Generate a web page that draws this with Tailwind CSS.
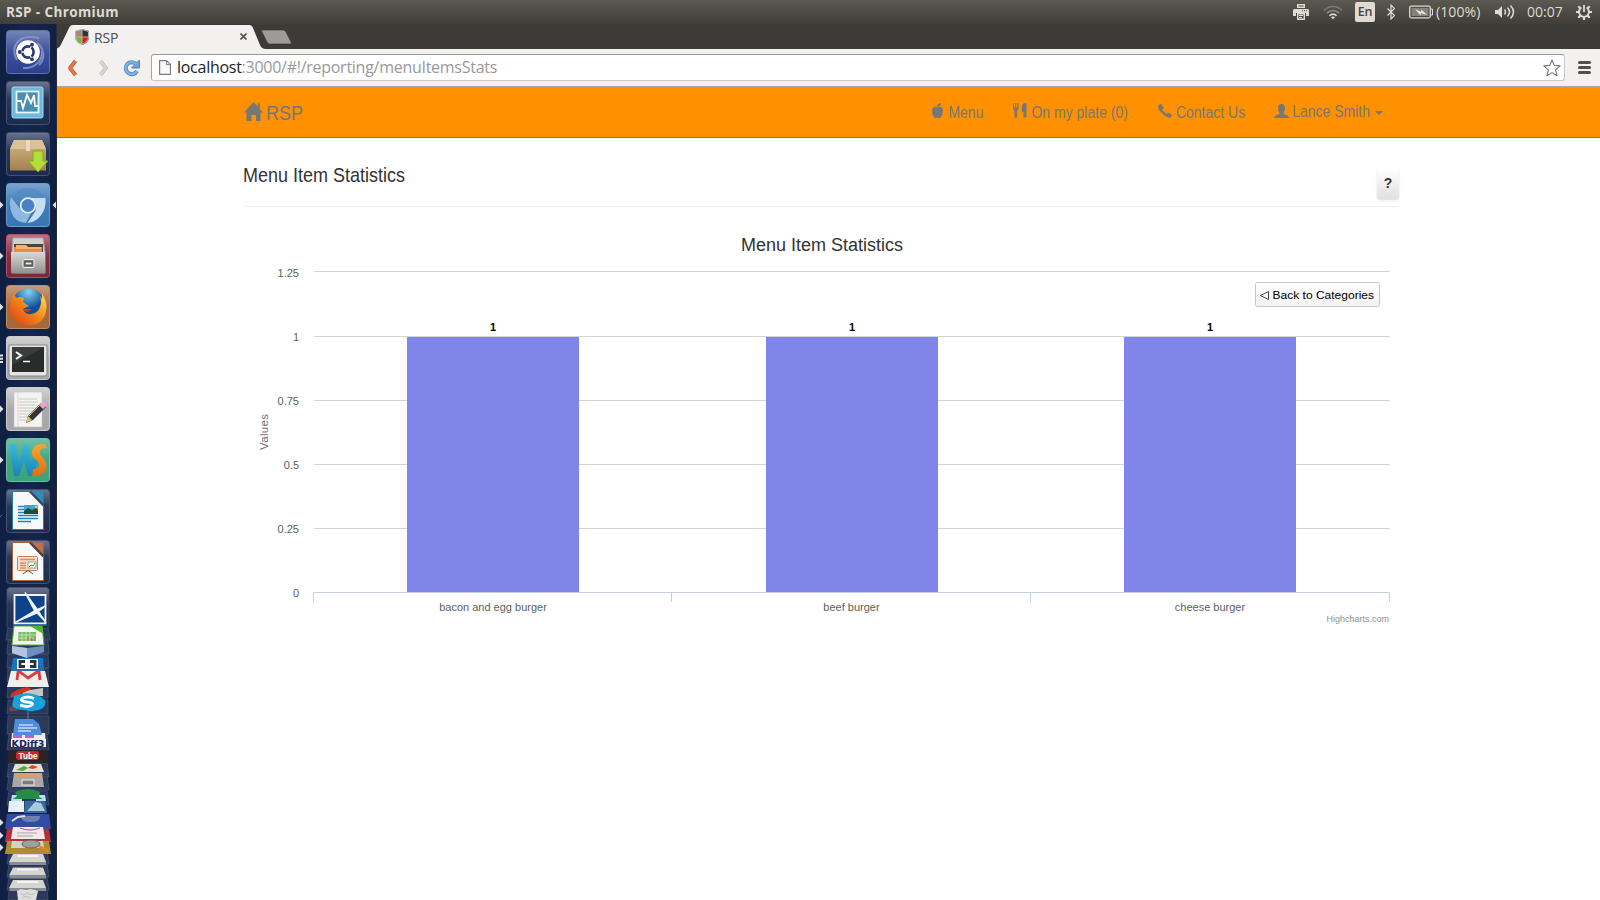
<!DOCTYPE html>
<html lang="en">
<head>
<meta charset="utf-8">
<title>RSP</title>
<script src="https://cdn.jsdelivr.net/npm/@tailwindcss/browser@4"></script>
</head>
<body class="w-[1600px] h-[900px] overflow-hidden bg-white font-['Liberation_Sans',Arial,sans-serif] flex flex-col">

<!-- system panel -->
<header class="h-6 shrink-0 flex items-center bg-gradient-to-b from-[#5b5950] to-[#3f3e39] text-[#dfdbd2] font-['Open_Sans','Noto_Sans',sans-serif]">
  <div class="ml-1.5 w-[200px] text-[13.5px] font-bold leading-6 tracking-[0.38px] whitespace-nowrap">RSP - Chromium</div>
  <div class="ml-auto flex items-center h-6 mr-2">
    <svg class="w-4 h-4" viewBox="0 0 16 16" fill="#dfdbd2"><path d="M4 0h8v4H4zM1 5h14l1 1v6h-3V9H3v3H0V6z"/><path d="M4.7 9.700h6.600v5.500H4.700z" fill="none" stroke="#dfdbd2" stroke-width="1.400"/><path d="M6 11h4v1H6zM6 13h3v1H6z"/><path d="M5.500 1.500h5v1h-5zM9 6.300h1v1H9zM11 6.300h1v1h-1zM13 6.300h1v1h-1z" fill="#4c4a43"/></svg>
    <svg class="ml-3.5 w-5 h-5" viewBox="0 0 20 20" fill="none" stroke-width="1.700"><path d="M.8 8.500C6 3.200 14 3.200 19.200 8.500" stroke="#7d7a72"/><path d="M3.800 11.200c3.800-3.600 8.600-3.600 12.400 0" stroke="#8d8a82"/><path d="M6.500 13.800c2.200-2 4.800-2 7 0" stroke="#dfdbd2"/><path d="M8 15.200q2-1.500 4 0l-2 2z" fill="#dfdbd2"/></svg>
    <div class="ml-3 w-5 h-5 rounded-[2px] bg-[#dfdbd2] text-[#45443f] text-[12.500px] leading-[20px] font-semibold text-center tracking-tight">En</div>
    <svg class="ml-3 w-2 h-4" viewBox="0 0 8 16" fill="none" stroke="#dfdbd2" stroke-width="1.200"><path d="M.5 4.500l7 7L4 15V1l3.500 3.500-7 7"/></svg>
    <svg class="ml-3.5 w-6 h-4" viewBox="0 0 24 16"><rect x=".7" y="2.200" width="20.600" height="11.600" rx="1.500" fill="none" stroke="#dfdbd2" stroke-width="1.300"/><rect x="2.500" y="4" width="17" height="8" fill="#85827a"/><path d="M22 5h1.500v6H22" stroke="#dfdbd2" fill="none"/><path d="M6 5l6 3 .5-2.500L18 11l-6-2-.5 2.500z" fill="#eeeae0"/></svg>
    <span class="ml-[3px] w-[47px] text-[14px] leading-6 tracking-[0.1px] whitespace-nowrap">(100%)</span>
    <svg class="ml-3 w-5 h-4" viewBox="0 0 20 16" fill="none" stroke="#dfdbd2" stroke-width="1.500"><path d="M0 6h3l4-4v12L3 10H0z" fill="#dfdbd2" stroke="none"/><path d="M9.500 5.500q2 2.500 0 5M12.500 3.500q4 4.500 0 9M15.500 1.500q6 6.500 0 13"/></svg>
    <span class="ml-3 w-9 text-[14px] leading-6 tracking-[0px] whitespace-nowrap">00:07</span>
    <svg class="ml-[13px] w-4 h-4" viewBox="0 0 16 16" fill="none" stroke="#dfdbd2"><path d="M10.500 3.500a5 5 0 1 1-5 0" stroke-width="1.900"/><path d="M8 1v7" stroke-width="1.800"/><path d="M2.300 2.300l2 2M13.700 2.300l-2 2M0 8h3M13 8h3M2.300 13.700l2-2M13.700 13.700l-2-2M8 13v3" stroke-width="2.200"/></svg>
  </div>
</header>

<div class="flex flex-1 min-h-0">
  <!-- launcher -->
  <aside class="w-[57px] shrink-0 bg-gradient-to-r from-[#0f1f42] via-[#142650] to-[#10203f] border-r border-[#292b38] flex flex-col">
    <div class="pt-1.5 flex flex-col gap-[7px]">
      <!-- dash -->
      <svg class="w-14 h-11" viewBox="-6 0 56 44"><defs><linearGradient id="dash" x2="0" y2="1"><stop stop-color="#7585b8"/><stop offset=".5" stop-color="#3c529a"/><stop offset="1" stop-color="#2c4090"/></linearGradient><linearGradient id="glass" x2="0" y2="1"><stop stop-color="#6b7590"/><stop offset=".4" stop-color="#2a3759"/><stop offset="1" stop-color="#1d2b50"/></linearGradient></defs>
        <rect x=".5" y=".5" width="43" height="43" rx="3" fill="url(#dash)" stroke="#6172ab"/><path d="M8 20C10 8 20 5 33 8M36 21c1 9-7 18-19 17M11 30C5 20 10 12 17 8M31 13c7 5 9 16 2 22" stroke="#8b9bcc" stroke-width="2" fill="none" opacity=".8"/><circle cx="22" cy="22" r="11.800" fill="#fff"/><circle cx="22" cy="22" r="5.600" fill="none" stroke="#2a3970" stroke-width="2.600"/><path d="M22 22L13 22M22 22l5-8.500M22 22l5 8.500" stroke="#fff" stroke-width="1.300"/><circle cx="22" cy="22" r="4" fill="#fff"/><g fill="#2a3970"><circle cx="13.700" cy="22" r="1.900"/><circle cx="26" cy="14.700" r="1.900"/><circle cx="26" cy="29.300" r="1.900"/></g></svg>
      <!-- system monitor -->
      <svg class="w-14 h-11" viewBox="-6 0 56 44"><rect x=".5" y=".5" width="43" height="43" rx="3" fill="url(#glass)" stroke="#46516e"/><rect x="6" y="6" width="31" height="31" rx="2" fill="#6cb9dd" stroke="#a2dcf0"/><rect x="10.500" y="10.500" width="22" height="21" fill="#468fb2" stroke="#e8f6fb" stroke-width="1.800"/><path d="M11 20h4l2 7 4-13 4 8 3-8 1 11h4" fill="none" stroke="#fff" stroke-width="1.800"/></svg>
      <!-- package installer -->
      <svg class="w-14 h-11" viewBox="-6 0 56 44"><defs><linearGradient id="box" x2="0" y2="1"><stop stop-color="#d5b788"/><stop offset="1" stop-color="#a3804f"/></linearGradient></defs><rect x=".5" y=".5" width="43" height="43" rx="3" fill="url(#glass)" stroke="#46516e"/><path d="M8 8h28l4 9v21.500H4V17z" fill="url(#box)"/><path d="M8 8h28l4 9H4z" fill="#dbc198"/><path d="M20 8h4v11h-4z" fill="#ead9bb"/><path d="M27 19h10v10h5L32 40 22 29h5z" fill="#b6db3c" stroke="#80a81c"/></svg>
      <!-- chromium -->
      <svg class="w-14 h-11" viewBox="-6 0 56 44"><defs><linearGradient id="chr" x2="0" y2="1"><stop stop-color="#7ba5cf"/><stop offset=".5" stop-color="#3f7cba"/><stop offset="1" stop-color="#3876b4"/></linearGradient></defs><path d="M-6 18.500l3.500 3.500-3.500 3.500zM50 18.500L46.500 22l3.500 3.500z" fill="#dfe2e6"/><rect x=".5" y=".5" width="43" height="43" rx="3" fill="url(#chr)" stroke="#6d9ccc"/><path d="M5 14L15 27q4 5 10 3l-5 10Q8 39 5 28q-2-7 0-14z" fill="#8db8e0"/><path d="M24 15h15.500q1 11-5 18-5 6-13 7l8-12q3-8-5.500-13z" fill="#c5def2"/><path d="M6 13Q12 5 22 5q12 0 17 10H23q-6 1-8 9z" fill="#5089c3" opacity=".6"/><circle cx="22" cy="22.500" r="8.300" fill="#e6f0fa"/><circle cx="22" cy="22.500" r="6.500" fill="#4b80c4"/></svg>
      <!-- files -->
      <svg class="w-14 h-11" viewBox="-6 0 56 44"><defs><linearGradient id="cab" x2="0" y2="1"><stop stop-color="#d8d8d6"/><stop offset="1" stop-color="#929290"/></linearGradient><linearGradient id="red" x2="0" y2="1"><stop stop-color="#b77583"/><stop offset=".5" stop-color="#852f43"/><stop offset="1" stop-color="#7b263b"/></linearGradient></defs><path d="M-6 18.500l3.500 3.500-3.500 3.500z" fill="#dfe2e6"/><rect x=".5" y=".5" width="43" height="43" rx="3" fill="url(#red)" stroke="#b05263"/><path d="M7 4h30l2 15v20H6V19z" fill="#d0d0cd" stroke="#aaa"/><path d="M8 10h29v9H8z" fill="#49453f"/><path d="M8 13h28v6H8z" fill="#e58c43"/><path d="M10 11h10l2 2h13v2H10z" fill="#f7b06d"/><path d="M5 18h34v21H5z" fill="url(#cab)"/><rect x="17" y="25.500" width="11" height="8" rx="1" fill="#777" stroke="#eee"/><rect x="19" y="28" width="7" height="3" fill="#eee" stroke="#444"/></svg>
      <!-- firefox -->
      <svg class="w-14 h-11" viewBox="-6 0 56 44"><defs><linearGradient id="ffb" x2="0" y2="1"><stop stop-color="#c99b7b"/><stop offset=".5" stop-color="#a86a40"/><stop offset="1" stop-color="#a5673b"/></linearGradient><radialGradient id="globe" cx=".5" cy=".1"><stop stop-color="#85d4f2"/><stop offset="1" stop-color="#124f98"/></radialGradient><linearGradient id="fox" x1="1" x2="0" y2="1"><stop stop-color="#ffe34d"/><stop offset=".5" stop-color="#f38219"/><stop offset="1" stop-color="#d63d12"/></linearGradient></defs><path d="M-6 18.500l3.500 3.500-3.500 3.500z" fill="#dfe2e6"/><rect x=".5" y=".5" width="43" height="43" rx="3" fill="url(#ffb)" stroke="#c18c66"/><circle cx="22.500" cy="20" r="16.500" fill="url(#globe)"/><path d="M5 14l2-5 4 4q4-2 7 0l-1 4 6 4-6 3q2 6 8 5 7-1 9-7 2-5 0-11l2 3 0-5q5 7 4.500 14Q39 40 22 40.500 4 39 4 23q0-5 1-9z" fill="url(#fox)"/><path d="M17 25q5 4 9-1l-5 0q-3-1-4 1z" fill="#c8431a"/></svg>
      <!-- terminal -->
      <svg class="w-14 h-11" viewBox="-6 0 56 44"><defs><linearGradient id="grey" x2="0" y2="1"><stop stop-color="#d2d2d4"/><stop offset=".5" stop-color="#aaaaae"/><stop offset="1" stop-color="#a7a7ac"/></linearGradient></defs><path d="M-6 18.500h3v2h-3zM-6 21.700h3v2h-3zM-6 25h3v2h-3z" fill="#dfe2e6"/><rect x=".5" y=".5" width="43" height="43" rx="3" fill="url(#grey)" stroke="#ccc"/><path d="M3 9h38v29l-2 2H5l-2-2z" fill="#e4e4e2" stroke="#888"/><path d="M6 11h32v25H6z" fill="#292c2b"/><path d="M6 11h32L6 29z" fill="#3b3e3d"/><path d="M10 16l5 3.500-5 3.500" fill="none" stroke="#fff" stroke-width="2"/><path d="M17 25.500h7" stroke="#fff" stroke-width="1.500"/></svg>
      <!-- text editor -->
      <svg class="w-14 h-11" viewBox="-6 0 56 44"><path d="M-6 18.500l3.500 3.500-3.500 3.500z" fill="#dfe2e6"/><rect x=".5" y=".5" width="43" height="43" rx="3" fill="url(#grey)" stroke="#ccc"/><path d="M8 5h28v35H8z" fill="#f3f3f2" stroke="#c5c5c5" stroke-width=".6"/><path d="M12 5v35" stroke="#e9baba" stroke-width=".6"/><path d="M13 12h18M13 15h19M13 18h16M13 21h18M13 24h15M13 27h10M13 30h12M13 33h7" stroke="#c9c9cb"/><path d="M20 36l2-7 13-13 5 4-13 13z" fill="#343437"/><path d="M20 36l2-7 4 4z" fill="#dac46e"/><path d="M33 18l4-4 4 4-4 4z" fill="#e9a5ce"/><path d="M23 29l12-12" stroke="#c9b451" stroke-width="1"/></svg>
      <!-- webstorm -->
      <svg class="w-14 h-11" viewBox="-6 0 56 44"><defs><linearGradient id="wsb" x2="0" y2="1"><stop stop-color="#75bfa4"/><stop offset=".5" stop-color="#42a681"/><stop offset="1" stop-color="#3ba47d"/></linearGradient><linearGradient id="wsw" x2="0" y2="1"><stop stop-color="#36bbdc"/><stop offset="1" stop-color="#1a83b9"/></linearGradient><linearGradient id="wss" x2="0" y2="1"><stop stop-color="#f8a62d"/><stop offset="1" stop-color="#e16b13"/></linearGradient></defs><path d="M-6 18.500l3.500 3.500-3.500 3.500z" fill="#dfe2e6"/><rect x=".5" y=".5" width="43" height="43" rx="3" fill="url(#wsb)" stroke="#70c0a5"/><path d="M3 6h7l3 19 5-19h4l3 18 3-7 4 7-6 14h-4l-4-16-5 16H8z" fill="url(#wsw)"/><path d="M41 10l-2-4q-11-1-13 7-1 5 4 9 4 3 3 6-1 3-6 3l-1 7q11 1 14-6 2-6-3-12-4-4-3-7 1-3 7-3z" fill="url(#wss)"/></svg>
      <!-- writer -->
      <svg class="w-14 h-11" viewBox="-6 0 56 44"><path d="M-6 28l2-2" stroke="#49688f"/><rect x=".5" y=".5" width="43" height="43" rx="3" fill="url(#glass)" stroke="#46516e"/><path d="M6.500 2.500h18l13 14v24h-31z" fill="#f7f8f8" stroke="#247eab"/><path d="M25 2.500h12.500V15z" fill="#3688b5"/><path d="M24 2.500l13.500 14" stroke="#2d4a66" stroke-width="2.500"/><path d="M12 17.500h6M12 20.500h6M12 23.500h6M12 26.500h20M12 29.500h20M12 32.500h13" stroke="#2482b5" stroke-width="1.300"/><rect x="18" y="16" width="14" height="9" fill="#3fa6d6"/><path d="M18 25v-3l4-3 4 2 4-2 2 2v4z" fill="#274c30"/><circle cx="30" cy="18" r="1.200" fill="#ffdf4b"/></svg>
      <!-- impress -->
      <svg class="w-14 h-11" viewBox="-6 0 56 44"><rect x=".5" y=".5" width="43" height="43" rx="3" fill="url(#glass)" stroke="#46516e"/><path d="M6.500 2.500h18l13 14v24h-31z" fill="#f7f8f8" stroke="#b26136"/><path d="M25 2.500h12.500V15z" fill="#bd704b"/><path d="M24 2.500l13.500 14" stroke="#4c3f45" stroke-width="2.500"/><rect x="11.500" y="16.500" width="20" height="14" rx="1" fill="#f7ded0" stroke="#cf7d52"/><path d="M14 19.500h15M14 23h6M14 25.500h6M14 28h6" stroke="#dc8c68" stroke-width="1.300"/><rect x="22" y="22" width="8" height="6" fill="#fff" stroke="#88ae7e"/><path d="M23 27l2-2 2 1 2-3" stroke="#2e9859" fill="none"/><path d="M17 34l4-3h2l4 3" fill="none" stroke="#555"/></svg>
    </div>
    <!-- collapsed launcher items -->
    <svg class="w-14 h-[316px] shrink-0" viewBox="0 584 56 316">
      <g fill="#2b395b" stroke="#47546f" stroke-width=".7"><path d="M8 626h40l2 14H6zM8 640h40l1 14H7zM8 654h40l1 14H7zM8 668h40l1 14H7zM8 684h40v14H7zM8 700h40v14H7zM8 716h41v18H7zM9 734h38l2 16H7zM9 763h38l2 14H7zM9 774h38l2 16H7zM9 791h38l2 14H7zM9 850h38l2 14H7zM9 864h38l2 13H7zM9 877h38l2 13H7zM9 890h38l1 10H8z"/><path d="M9 587.500h38l2 2v36l-2 3H9l-2-3v-36z" fill="url(#glass)"/></g>
      <!-- spreadsheet -->
      <path d="M14 626h28l2 19H12z" fill="#f2f5ef" stroke="#5cb330"/><path d="M30 626h12l1.500 8z" fill="#54b52c"/><path d="M18.500 632h17.500v9H18z" fill="#74bf65"/><path d="M18 635h18M18 638h18M22 632v9M26 632v9M30 632v9" stroke="#d8efd2" stroke-width=".7"/><path d="M28 641v-4M35 641v-4" stroke="#df7741" stroke-width="1.700"/><path d="M31.500 641v-3" stroke="#3f9ed0" stroke-width="1.700"/>
      <!-- crossed lines window -->
      <path d="M14.500 595h31v28.500h-31z" fill="#0c438b" stroke="#f0f4fa" stroke-width="1.800"/><path d="M13 625h34" stroke="#2d6bb0" stroke-width="1.300"/><path d="M25 592.500l11 15 10 15-12-13zM15 622.500l20-12 11-5-10 8z" fill="#f0f5fb" stroke="#f0f5fb" stroke-width="1.300"/>
      <!-- cube -->
      <path d="M12 646l15 2 17-2v6l-17 6-15-5z" fill="#6e8fc3"/><path d="M12 646l15 2v10l-15-5z" fill="#b4c5e0"/>
      <!-- brackets -->
      <path d="M13 658h30l1 13H11z" fill="#1974c0"/><path d="M17 659h21v10H17z" fill="#fff"/><path d="M25 661.500h-5v5h5M30 661.500h5v5h-5" fill="none" stroke="#27323c" stroke-width="2.800"/>
      <!-- mail -->
      <path d="M11 671h34l4 16H7z" fill="#f0eeeb"/><path d="M17 680l1-8h2l8 6 9-6h2l1 8" fill="none" stroke="#dc3c3d" stroke-width="2.800"/>
      <!-- knife and chat -->
      <path d="M23 691l20-3v8H22z" fill="#c8c5bf"/><path d="M11 694q5-5 16-7l5 2q-10 4-18 8h-4z" fill="#cc3325"/><path d="M14 696q14-6 27 1 8 5 2 11-8 5-19 2-15-1-11-8z" fill="#18a1dc"/><path d="M34 698.500q-7-3-12 0-2 3 5 3.500t5 3q-4 3-12 0" fill="none" stroke="#fff" stroke-width="2.800"/><path d="M10 706l9 5H9z" fill="#704744"/><path d="M28 711v10" stroke="#8d98aa" stroke-width=".7"/>
      <!-- documents and diff -->
      <path d="M12 733h33l1 14H11z" fill="#eee"/><path d="M13 734h9v4h-9zM25 734h9v4h-9z" fill="#c45bcc"/><path d="M15 719h18l6 5 3 11H13z" fill="#4d8de0"/><path d="M19 725h14M18 728h19M18 731h13" stroke="#fff" stroke-width="1"/>
      <path d="M11 739h35v8H11z" fill="#f4f3f8"/><text x="11.500" y="746.800" textLength="33" lengthAdjust="spacingAndGlyphs" font-family="DejaVu Sans" font-size="8.500" font-weight="bold" fill="#202458">KDiff3</text>
      <!-- tube -->
      <path d="M9 750h38l2 13H7z" fill="#292522"/><rect x="16" y="751" width="23" height="9" rx="3" fill="#bd2c2b"/><text x="18.500" y="758.600" textLength="19" lengthAdjust="spacingAndGlyphs" font-family="Liberation Sans" font-size="8.500" font-weight="bold" fill="#fff">Tube</text>
      <!-- paint, cabinet, remote, pictures -->
      <path d="M15 764h26l3 8H12z" fill="#e1dfd6"/><path d="M16 770l8-4 4 2-5 3z" fill="#54a53d"/><path d="M28 768l4-3 6 2-5 2z" fill="#df442c"/>
      <path d="M14 773h28l2 14H12z" fill="#aaa9a6"/><path d="M15 774h26v3H15z" fill="#d8a06d"/><rect x="22" y="780" width="12" height="5" fill="#7b7b79" stroke="#eee"/>
      <path d="M12 795h10v6H11zM36 795h9l1 6H36z" fill="#b9def2"/><path d="M15 792q13-6 25 0l-1 5 4 2H13l4-3z" fill="#258b48"/>
      <path d="M9 801h15v11H8z" fill="#e6f0fc"/><path d="M25 801h20l2 12H24z" fill="#366b9d"/><path d="M27 811l8-9 6 1 4 8z" fill="#a9c9e2"/>
      <path d="M0 819l3.500 3.500L0 826zM0 832l3.500 3.500L0 839zM0 844l3.500 3.500L0 851z" fill="#dfe2e6"/>
      <path d="M7 814h42l2 15H5z" fill="#354ba0"/><path d="M21 816h19q1 6-10 6-9 0-9-6z" fill="#6e82b0"/><path d="M12 821l6-4 7-1" stroke="#d9dceb" stroke-width="2" fill="none"/>
      <path d="M7 829h42l2 13H5z" fill="#b82f3b"/><path d="M13 827h30l2 12H11z" fill="#eee9e8"/><path d="M17 833h20M17 836h16" stroke="#aaa5a5"/><path d="M20 828q10 4 20 0" stroke="#c65360" fill="none"/>
      <path d="M7 841h42l2 13H5z" fill="#b08b34"/><path d="M12 841h31l1 7H11z" fill="#d4d1c5"/><ellipse cx="31" cy="844" rx="9" ry="4" fill="#9fa099" stroke="#635f57"/><path d="M39 846l9 5" stroke="#dd8a21" stroke-width="2.500"/>
      <!-- drives and bin -->
      <g id="drive"><path d="M13 854h30l3 8H9z" fill="#d4d4d3"/><path d="M9 862h37v3H10z" fill="#898b90"/><path d="M17 856h21" stroke="#f5f5f5" stroke-width="2"/></g><use href="#drive" y="13.500"/><use href="#drive" y="26"/>
      <path d="M17 891l4-2 5 1 5-1 7 2-2 9H18z" fill="#dededc"/><path d="M20 893l3 2 4-2 4 2 4-2M22 898l4-2 5 2" fill="none" stroke="#bcbcb9"/>
    </svg>
  </aside>

  <!-- browser window -->
  <section class="flex-1 min-w-0 flex flex-col">
    <div class="relative h-[25px] shrink-0 bg-[#3c3b37] flex">
      <svg class="absolute left-0 top-0 w-[240px] h-[25px]" viewBox="0 0 240 25"><path d="M0 25v-.5q3-1 4-4L12 4q1-3 4-3h176q3 0 4 3l7 17q1 3 5 4z" fill="#f2f1f0"/><path d="M205 6h21q2 0 3 2l5 10q1 2-1 2h-20q-2 0-3-2l-5-10q-1-2 0-2z" fill="#9c9b97" stroke="#343330" stroke-width=".6"/></svg>
      <div class="relative flex items-center w-[200px] pl-[18px] pr-[10px]">
        <svg class="w-[14px] h-4 shrink-0" viewBox="0 0 14 16"><path d="M7 0l7 2v6q0 5-7 8z" fill="#333"/><path d="M7 0L0 2v6h7z" fill="#a18a73"/><path d="M0 8q0 5 7 8V8z" fill="#7cb33a"/><path d="M14 8q0 5-7 8V8z" fill="#dc2019"/><path d="M7 0v16M0 8h14M7 .5l6.500 2V8q0 4.500-6.500 7.400Q.5 12.500.5 8V2.500z" stroke="#b5b3ad" fill="none"/></svg>
        <span class="ml-[5px] mt-px text-[14px] leading-[25px] text-[#4b4b4b] tracking-[-0.2px] font-['Open_Sans','Noto_Sans',sans-serif]">RSP</span>
        <svg class="ml-auto w-[7px] h-[7px]" viewBox="0 0 7 7"><path d="M.5.5l6 6m0-6l-6 6" stroke="#555" stroke-width="1.600"/></svg>
      </div>
    </div>

    <div class="h-[38px] shrink-0 bg-[#f2f1f0] border-b border-[#a5a5a5] flex items-center pl-[10px] pr-[9px]">
      <svg class="w-[11px] h-[18px]" viewBox="0 0 11 18"><path d="M8.500 2L3 9l5.500 7" fill="none" stroke="#c9552b" stroke-width="3.700" stroke-linejoin="round"/><path d="M8.500 2L3 9l5.500 7" fill="none" stroke="#ee7847" stroke-width="2.200"/></svg>
      <svg class="ml-5 w-[11px] h-[18px]" viewBox="0 0 11 18"><path d="M2.500 2L8 9l-5.500 7" fill="none" stroke="#bbb" stroke-width="3.700"/><path d="M2.500 2L8 9l-5.500 7" fill="none" stroke="#d7d6d5" stroke-width="2.200"/></svg>
      <svg class="ml-[14px] w-[17px] h-[18px]" viewBox="0 0 17 18"><path d="M13.500 5.500A6 6 0 1 0 14 12" fill="none" stroke="#4f85c2" stroke-width="4"/><path d="M16.500 1v8h-8z" fill="#6ca0d8" stroke="#4f85c2"/><path d="M13.500 5.500A6 6 0 1 0 14 12" fill="none" stroke="#7fb0e2" stroke-width="2.400"/></svg>
      <div class="ml-[11px] flex-1 h-[27px] rounded-[3px] bg-white border border-[#c9c8c6] border-t-[#96969a] border-l-[#a5a5a5] flex items-center pl-[7px] pr-[3px]">
        <svg class="w-3 h-[15px] mr-[6px]" viewBox="0 0 12 15"><path d="M.6.6h6.900l4 4v9.800H.6z" fill="#fafafa" stroke="#7d7d7d" stroke-width="1.200"/><path d="M7.500.6v4h4" fill="none" stroke="#7d7d7d"/></svg>
        <span class="text-[16px] leading-[25px] whitespace-nowrap text-[#999] tracking-[-0.27px] font-['Open_Sans','Noto_Sans',sans-serif]"><span class="text-[#222]">localhost</span>:3000/#!/reporting/menuItemsStats</span>
        <svg class="ml-auto w-[18px] h-[18px]" viewBox="0 0 18 18"><path d="M9 1l2.200 5.400 6 .5-4.600 3.900 1.500 6L9 13.600l-5.100 3.200 1.500-6L.8 6.900l6-.5z" fill="#fff" stroke="#777" stroke-width="1.100" stroke-linejoin="round"/></svg>
      </div>
      <svg class="ml-[13px] w-[13px] h-[13px]" viewBox="0 0 13 13"><path d="M1.500 1.500h10M1.500 6.500h10M1.500 11.500h10" stroke="#505050" stroke-width="3" stroke-linecap="round"/></svg>
    </div>

    <!-- site navigation -->
    <nav class="h-[51px] shrink-0 bg-[#ff9000] border-b border-[#777] text-[#777] flex items-center pl-[187px] pr-[217px]">
      <svg class="w-[19px] h-[19px] -mt-0.5" viewBox="0 0 19 19" fill="#777"><path d="M9.500 0L19 10.500h-2.500V19H12v-6H7.500v6h-5v-8.500H0L9.500 0z"/><path d="M13.500 1.500H16V6h-2.500z"/></svg>
      <span class="ml-[3px] mt-[2px] text-[18px] leading-5 scale-y-[1.1]">RSP</span>
      <div class="ml-auto flex items-center text-[14px] leading-5 whitespace-nowrap">
        <a class="flex items-center"><svg class="w-[11px] h-[15px] mr-[5px] -mt-[3px]" viewBox="0 0 11 15" fill="#777"><path d="M5.500 4.700Q7 3.500 9 4q2 .8 2 4-.3 5-3 7-1 .5-2.500-.3Q4 15.500 3 15 0 13 0 8q0-3 2-4 2-.5 3.500.7z"/><path d="M5 4q0-3.500 4-4 0 3.500-4 4z"/></svg><span class="scale-y-[1.12]">Menu</span></a>
        <a class="ml-[30px] flex items-center"><svg class="w-[14px] h-[15px] mr-[4px] -mt-[3px]" viewBox="0 0 14 15" fill="#777"><path d="M0 0h1v4.500h1V0h1.200v4.500h1V0h1.300v5Q5.500 7 4.200 7.500V14q-1.400 2-2.700 0V7.500Q0 7 0 5zM9 2q1-2 4.500-2v14.500h-3V9H9z"/></svg><span class="scale-y-[1.12]">On my plate (0)</span></a>
        <a class="ml-[30px] flex items-center"><svg class="w-[14px] h-[14px] mr-[4px] -mt-[3px]" viewBox="0 0 14 14" fill="#777"><path d="M1 .8L3 0l2.800 4-1.600 1.800Q6 8.800 8.600 10l1.800-1.500L14 11.300l-1 2Q11 15 6.500 11.500 0 6 0 2.500z"/></svg><span class="scale-y-[1.12]">Contact Us</span></a>
        <a class="ml-[29px] flex items-center"><svg class="w-[15px] h-[14px] mr-[3px] -mt-[3px]" viewBox="0 0 15 14" fill="#777"><path d="M7.500 0Q11 0 11 4q0 3-1.500 4.500v1.300L14 12q1 .5 1 2H0q0-1.500 1-2l4.500-2.200V8.500Q4 7 4 4q0-4 3.500-4z"/></svg><span class="scale-y-[1.12] -mt-0.5">Lance Smith</span><span class="ml-[5px] mt-0.5 border-x-4 border-t-4 border-x-transparent border-t-[#777]"></span></a>
      </div>
    </nav>

    <!-- report page -->
    <main class="flex-1 bg-white pl-[187px] pr-[201px] text-[#333]">
      <div class="h-[69px] border-b border-[#eee] flex justify-between">
        <h1 class="-ml-px mt-[28px] text-[18px] leading-5 scale-y-[1.08] h-5">Menu Item Statistics</h1>
        <button class="mt-[30px] w-[22px] h-[31px] pb-px rounded-[3px] bg-gradient-to-b from-white to-[#e0e0e0] shadow-[0_1px_2px_rgba(0,0,0,0.15)] text-[14px] font-bold leading-none text-[#333]">?</button>
      </div>
      <svg class="block w-[1155px] h-[430px]" viewBox="244 207 1155 430" font-family="Liberation Sans, Arial, sans-serif">
        <text x="822" y="251" text-anchor="middle" font-size="18" fill="#333">Menu Item Statistics</text>
        <path d="M314 271.500h1075.500M314 336.500h1075.500M314 400.500h1075.500M314 464.500h1075.500M314 528.500h1075.500" stroke="#d4d4d4"/>
        <g fill="#8085e9"><path d="M407 337h172v255H407zM766 337h172v255H766zM1124 337h172v255h-172z"/></g>
        <path d="M313.500 602v-9.500h1076v9.500M671.500 592.500v9.500M1030.500 592.500v9.500" fill="none" stroke="#c0d0e0"/>
        <g font-size="11" fill="#606060" text-anchor="end"><text x="299" y="277">1.25</text><text x="299" y="341">1</text><text x="299" y="405">0.75</text><text x="299" y="469">0.5</text><text x="299" y="533">0.25</text><text x="299" y="597">0</text></g>
        <g font-size="11" fill="#606060" text-anchor="middle"><text x="493" y="611">bacon and egg burger</text><text x="851.500" y="611">beef burger</text><text x="1210" y="611">cheese burger</text></g>
        <g font-size="11" font-weight="bold" fill="#000" text-anchor="middle"><text x="493" y="331">1</text><text x="852" y="331">1</text><text x="1210" y="331">1</text></g>
        <text transform="translate(268 432) rotate(-90)" text-anchor="middle" font-size="11.500" textLength="36" fill="#707070">Values</text>
        <defs><linearGradient id="btn" x2="0" y2="1"><stop stop-color="#fff"/><stop offset="1" stop-color="#f2f2f2"/></linearGradient></defs>
        <rect x="1255.500" y="282.500" width="124" height="24" rx="2" fill="url(#btn)" stroke="#c6c6c6"/>
        <path d="M1268.500 291.500v8l-8-4z" fill="none" stroke="#333" stroke-width=".9"/>
        <text x="1272.500" y="299" font-size="11.500" textLength="101.500" lengthAdjust="spacingAndGlyphs" fill="#000">Back to Categories</text>
        <text x="1389" y="622" text-anchor="end" font-size="9" fill="#909090">Highcharts.com</text>
      </svg>
    </main>
  </section>
</div>
</body>
</html>
